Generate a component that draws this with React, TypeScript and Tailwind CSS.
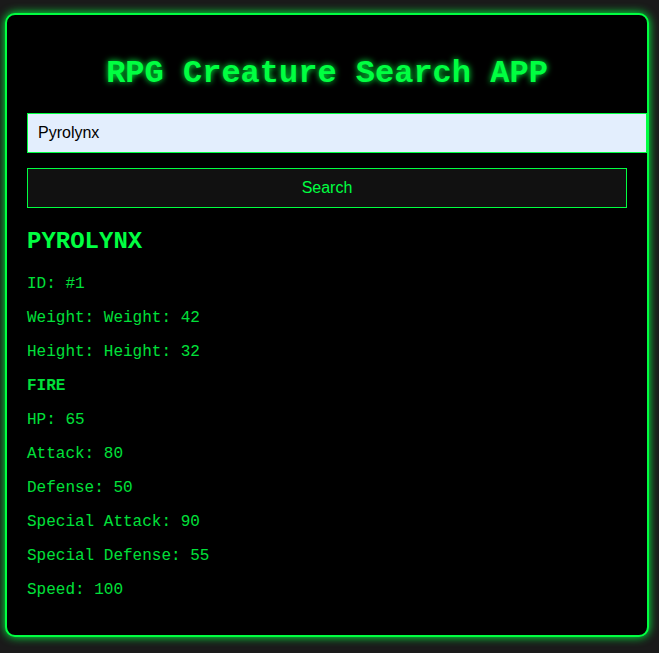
import { useState } from "react";

const stats = [
  { label: "HP", value: 65 },
  { label: "Attack", value: 80 },
  { label: "Defense", value: 50 },
  { label: "Special Attack", value: 90 },
  { label: "Special Defense", value: 55 },
  { label: "Speed", value: 100 },
];

export default function App() {
  const [query, setQuery] = useState("Pyrolynx");

  return (
    <div className="min-h-[653px] bg-[#1a1a1a] pt-[13px] pb-[17px] font-['Courier_New','Liberation_Mono',monospace]">
      {/* main panel */}
      <div className="ml-[5px] w-[644px] rounded-[10px] border-2 border-[#00ff41] bg-black p-5 shadow-[0_0_10px_#00ff41]">
        <h1 className="my-[21px] text-center text-[32px] leading-[36px] font-bold text-[#00ff41] [text-shadow:0_0_6px_#00ff41]">
          RPG Creature Search APP
        </h1>

        <input
          value={query}
          onChange={(e) => setQuery(e.target.value)}
          className="block h-10 w-[620px] border border-[#00ff41] bg-[#e3eefd] px-[10px] font-['Liberation_Sans',Arial,sans-serif] text-base text-black outline-none"
        />

        <button className="mt-[15px] block h-10 w-full border border-[#00ff41] bg-[#111111] font-['Liberation_Sans',Arial,sans-serif] text-base text-[#00ff41]">
          Search
        </button>

        <h2 className="mt-5 mb-5 text-2xl leading-[27px] font-bold text-[#00ff41]">PYROLYNX</h2>

        <div className="flex flex-col gap-4 pb-4 text-base leading-[18px] text-[#00e03a]">
          <p>ID: #1</p>
          <p>Weight: Weight: 42</p>
          <p>Height: Height: 32</p>
          <p className="font-bold">FIRE</p>
          {stats.map((s) => (
            <p key={s.label}>
              {s.label}: {s.value}
            </p>
          ))}
        </div>
      </div>
    </div>
  );
}
